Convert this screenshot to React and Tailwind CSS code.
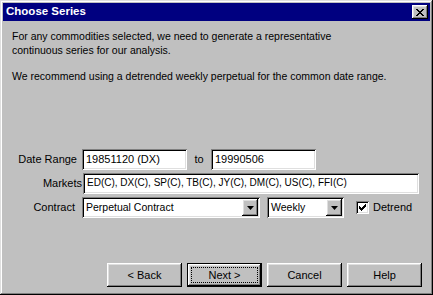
import React from 'react';

const raised =
  'shadow-[inset_-1px_-1px_#000,inset_1px_1px_#fff,inset_-2px_-2px_#808080,inset_2px_2px_#dfdfdf]';
const sunken =
  'shadow-[inset_1px_1px_#808080,inset_-1px_-1px_#fff,inset_2px_2px_#000,inset_-2px_-2px_#dfdfdf]';

function Field({ value, className = '' }) {
  return (
    <div className={`h-[21px] bg-white ${sunken} flex items-center pl-[4px] ${className}`}>
      <span className="leading-none">{value}</span>
    </div>
  );
}

function Combo({ value, className = '' }) {
  return (
    <div className={`h-[21px] bg-white ${sunken} flex items-center pl-[4px] pr-[2px] ${className}`}>
      <span className="flex-1 leading-none text-[10.5px]">{value}</span>
      <div className={`w-[16px] h-[17px] bg-[#c0c0c0] ${raised} flex items-center justify-center`}>
        <svg width="7" height="4" viewBox="0 0 7 4">
          <path d="M0 0h7L3.5 4z" fill="#000" />
        </svg>
      </div>
    </div>
  );
}

function Button({ children, isDefault }) {
  if (isDefault) {
    return (
      <div className="w-[75px] h-[24px] border border-black">
        <div className={`w-full h-full bg-[#c0c0c0] ${raised} flex items-center justify-center p-[3px]`}>
          <div className="w-full h-full border border-dotted border-black flex items-center justify-center">
            {children}
          </div>
        </div>
      </div>
    );
  }
  return (
    <div className={`w-[75px] h-[24px] bg-[#c0c0c0] ${raised} flex items-center justify-center`}>
      {children}
    </div>
  );
}

export default function App() {
  return (
    <div
      className="w-[433px] h-[295px] bg-[#c0c0c0] text-black text-[11px] shadow-[inset_-1px_-1px_#000,inset_1px_1px_#dfdfdf,inset_-2px_-2px_#808080,inset_2px_2px_#fff] p-[3px] flex flex-col"
      style={{ fontFamily: '"Liberation Sans", Arial, sans-serif' }}
    >
      {/* Title bar */}
      <div className="h-[18px] bg-[#000080] flex items-center justify-between pl-[3px] pr-[2px]">
        <span className="text-white font-bold text-[11.5px] leading-none">Choose Series</span>
        <div className={`w-[16px] h-[14px] bg-[#c0c0c0] ${raised} flex items-center justify-center`}>
          <svg width="8" height="7" viewBox="0 0 8 7">
            <path d="M0 0h2v1h1v1h2V1h1V0h2v1H7v1H6v1H5v1h1v1h1v1h1v1H6V6H5V5H3v1H2v1H0V6h1V5h1V4h1V3H2V2H1V1H0z" fill="#000" />
          </svg>
        </div>
      </div>

      {/* Body */}
      <div className="flex-1 flex flex-col pt-[9px]">
        <div className="pl-[9px] leading-[13px] text-[10.5px]">
          <p>For any commodities selected, we need to generate a representative</p>
          <p className="mt-[1px]">continuous series for our analysis.</p>
          <p className="mt-[13px]">We recommend using a detrended weekly perpetual for the common date range.</p>
        </div>

        <div className="mt-[66px] flex flex-col">
          <div className="flex items-center h-[21px]">
            <span className="w-[79px] text-right pr-[5px]">Date Range</span>
            <Field value="19851120 (DX)" className="w-[105px]" />
            <span className="w-[24px] text-center">to</span>
            <Field value="19990506" className="w-[105px]" />
          </div>
          <div className="flex items-center h-[20px] mt-[3px]">
            <span className="w-[80px] text-right pr-[1px]">Markets</span>
            <Field
              value="ED(C), DX(C), SP(C), TB(C), JY(C), DM(C), US(C), FFI(C)"
              className="w-[336px] h-[20px] text-[10px]"
            />
          </div>
          <div className="flex items-center h-[21px] mt-[4px]">
            <span className="w-[79px] text-right pr-[7px]">Contract</span>
            <Combo value="Perpetual Contract" className="w-[178px]" />
            <Combo value="Weekly" className="w-[77px] ml-[7px]" />
            <div className={`w-[13px] h-[13px] bg-white ${sunken} ml-[12px] flex items-center justify-center`}>
              <svg width="7" height="7" viewBox="0 0 7 7">
                <path d="M6 0h1v3H6v1H5v1H4v1H3v1H2V6H1V5H0V2h1v1h1v1h1V3h1V2h1V1h1z" fill="#000" />
              </svg>
            </div>
            <span className="ml-[4px]">Detrend</span>
          </div>
        </div>

        <div className="mt-auto mb-[5px] flex justify-end gap-[5px] pr-[8px]">
          <Button>&lt; Back</Button>
          <Button isDefault>Next &gt;</Button>
          <Button>Cancel</Button>
          <Button>Help</Button>
        </div>
      </div>
    </div>
  );
}
